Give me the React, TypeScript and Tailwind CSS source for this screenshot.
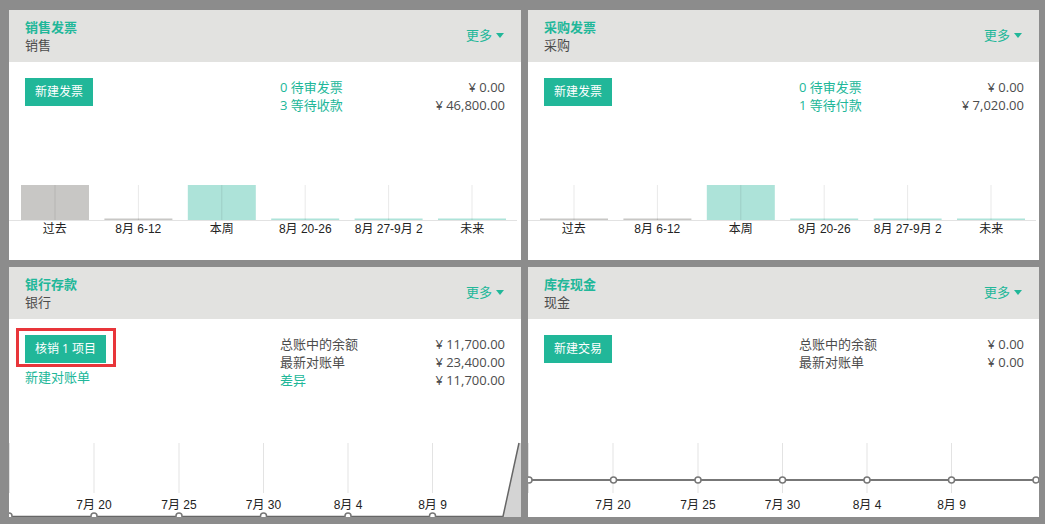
import { Fragment } from 'react';

type StatRow = { label: string; amount: string; link?: boolean };
type Bar = { kind: 'past' | 'pastThin' | 'now' | 'futureThin' };

const barCenters = [46, 129.4, 212.8, 296.2, 379.6, 463];
const lineTicks = [85, 170, 254.5, 339, 423.5];
const tickLabels = ['7月 20', '7月 25', '7月 30', '8月 4', '8月 9'];

function Header({ title, sub }: { title: string; sub: string }) {
    return (
        <div className="h-[52px] shrink-0 bg-[#e2e2e0] flex items-start justify-between pl-4 pr-[17px] pt-2">
            <div className="text-[13px] leading-[18px]">
                <div className="font-bold text-[#21b799]">{title}</div>
                <div className="text-[#4c4c4c]">{sub}</div>
            </div>
            <div className="mt-2 flex items-center gap-[4px] text-[13px] leading-[18px] text-[#21b799]">
                更多
                <svg width="8" height="5" viewBox="0 0 8 5">
                    <path d="M0 0h8L4 5z" fill="#21b799" />
                </svg>
            </div>
        </div>
    );
}

function Stats({ rows }: { rows: StatRow[] }) {
    return (
        <div className="w-[225px] grid grid-cols-[1fr_auto] text-[13px] leading-[18px]">
            {rows.map((r) => (
                <Fragment key={r.label}>
                    <div className={r.link ? 'text-[#21b799]' : 'text-[#4c4c4c]'}>{r.label}</div>
                    <div className="text-right text-[#4c4c4c]">{r.amount}</div>
                </Fragment>
            ))}
        </div>
    );
}

function TealButton({ children }: { children: string }) {
    return (
        <button className="h-7 px-[10px] bg-[#21b799] text-white text-[12px] leading-7 whitespace-nowrap">
            {children}
        </button>
    );
}

function BarChart({ bars }: { bars: Bar[] }) {
    const labels = ['过去', '8月 6-12', '本周', '8月 20-26', '8月 27-9月 2', '未来'];
    return (
        <div className="mt-auto pb-[23px]">
            <svg width="512" height="36" className="block">
                {bars.map((b, i) => {
                    const x = barCenters[i] - 34;
                    if (b.kind === 'past') return <rect key={i} x={x} y={0} width={68} height={35} fill="#c8c7c5" />;
                    if (b.kind === 'now') return <rect key={i} x={x} y={0} width={68} height={35} fill="#ade3d9" />;
                    const fill = b.kind === 'pastThin' ? '#c8c7c5' : '#ade3d9';
                    return <rect key={i} x={x} y={33.5} width={68} height={1.5} fill={fill} />;
                })}
                {barCenters.map((c) => (
                    <line key={c} x1={c} x2={c} y1={0} y2={35} stroke="rgba(0,0,0,0.09)" strokeWidth={1} />
                ))}
                <line x1={0} x2={508} y1={35.5} y2={35.5} stroke="#e2e2e2" strokeWidth={1} />
            </svg>
            <div className="ml-[4px] w-[501px] grid grid-cols-6 text-center text-[12px] leading-4 text-[#222] font-['Liberation_Sans','Noto_Sans_CJK_SC',sans-serif] whitespace-nowrap">
                {labels.map((l) => (
                    <div key={l}>{l}</div>
                ))}
            </div>
        </div>
    );
}

function LineChart({ flat }: { flat: boolean }) {
    const pts = flat ? [1, 85.5, 170, 254.5, 339, 423.5, 508] : [0, 85, 170, 254.5, 339, 423.5];
    const y = flat ? 45 : 81;
    return (
        <svg width="512" height="82" className="block mt-auto">
            <line x1={0.5} x2={0.5} y1={8} y2={58} stroke="#e3e3e3" />
            {lineTicks.map((x) => (
                <line key={x} x1={x} x2={x} y1={8} y2={58} stroke="#e3e3e3" />
            ))}
            {tickLabels.map((t, i) => (
                <text
                    key={t}
                    x={lineTicks[i]}
                    y={74}
                    textAnchor="middle"
                    fontSize={12}
                    fill="#222"
                    fontFamily="'Liberation Sans','Noto Sans CJK SC',sans-serif"
                >
                    {t}
                </text>
            ))}
            {flat ? (
                <line x1={0} x2={512} y1={y} y2={y} stroke="#777" strokeWidth={2} />
            ) : (
                <>
                    <polygon points="494,82 510,8 512,8 512,82" fill="#d4d4d4" />
                    <polyline points="0,81.5 494,81.5 510,8" fill="none" stroke="#666" strokeWidth={1.5} />
                </>
            )}
            {pts.map((x) => (
                <circle key={x} cx={x} cy={y} r={3} fill="#fff" stroke="#777" strokeWidth={1.5} />
            ))}
        </svg>
    );
}

function Card({ children }: { children: React.ReactNode }) {
    return <div className="bg-white flex flex-col overflow-hidden">{children}</div>;
}

export default function App() {
    return (
        <div className="w-[1045px] h-[524px] bg-[#8c8c8c] pt-[10px] pl-[9px] grid grid-cols-[512px_511px] grid-rows-[250px_250px] gap-x-[7px] gap-y-[7px] font-['Open_Sans','Noto_Sans_CJK_SC',sans-serif]">
            <Card>
                <Header title="销售发票" sub="销售" />
                <div className="flex-1 flex flex-col">
                    <div className="flex justify-between pl-4 pr-4 pt-4">
                        <TealButton>新建发票</TealButton>
                        <Stats
                            rows={[
                                { label: '0 待审发票', amount: '¥ 0.00', link: true },
                                { label: '3 等待收款', amount: '¥ 46,800.00', link: true },
                            ]}
                        />
                    </div>
                    <BarChart
                        bars={[
                            { kind: 'past' },
                            { kind: 'pastThin' },
                            { kind: 'now' },
                            { kind: 'futureThin' },
                            { kind: 'futureThin' },
                            { kind: 'futureThin' },
                        ]}
                    />
                </div>
            </Card>

            <Card>
                <Header title="采购发票" sub="采购" />
                <div className="flex-1 flex flex-col">
                    <div className="flex justify-between pl-4 pr-[15px] pt-4">
                        <TealButton>新建发票</TealButton>
                        <Stats
                            rows={[
                                { label: '0 待审发票', amount: '¥ 0.00', link: true },
                                { label: '1 等待付款', amount: '¥ 7,020.00', link: true },
                            ]}
                        />
                    </div>
                    <BarChart
                        bars={[
                            { kind: 'pastThin' },
                            { kind: 'pastThin' },
                            { kind: 'now' },
                            { kind: 'futureThin' },
                            { kind: 'futureThin' },
                            { kind: 'futureThin' },
                        ]}
                    />
                </div>
            </Card>

            <Card>
                <Header title="银行存款" sub="银行" />
                <div className="flex-1 flex flex-col">
                    <div className="flex justify-between pl-4 pr-4 pt-4">
                        <div className="flex flex-col items-start">
                            <div className="relative">
                                <TealButton>核销 1 项目</TealButton>
                                <div className="absolute -left-[9px] -right-[10px] -top-[7px] -bottom-[4px] border-[3px] border-[#e8353a] pointer-events-none" />
                            </div>
                            <div className="mt-[5px] text-[13px] leading-[18px] text-[#21b799]">新建对账单</div>
                        </div>
                        <Stats
                            rows={[
                                { label: '总账中的余额', amount: '¥ 11,700.00' },
                                { label: '最新对账单', amount: '¥ 23,400.00' },
                                { label: '差异', amount: '¥ 11,700.00', link: true },
                            ]}
                        />
                    </div>
                    <LineChart flat={false} />
                </div>
            </Card>

            <Card>
                <Header title="库存现金" sub="现金" />
                <div className="flex-1 flex flex-col">
                    <div className="flex justify-between pl-4 pr-[15px] pt-4">
                        <TealButton>新建交易</TealButton>
                        <Stats
                            rows={[
                                { label: '总账中的余额', amount: '¥ 0.00' },
                                { label: '最新对账单', amount: '¥ 0.00' },
                            ]}
                        />
                    </div>
                    <LineChart flat />
                </div>
            </Card>
        </div>
    );
}
